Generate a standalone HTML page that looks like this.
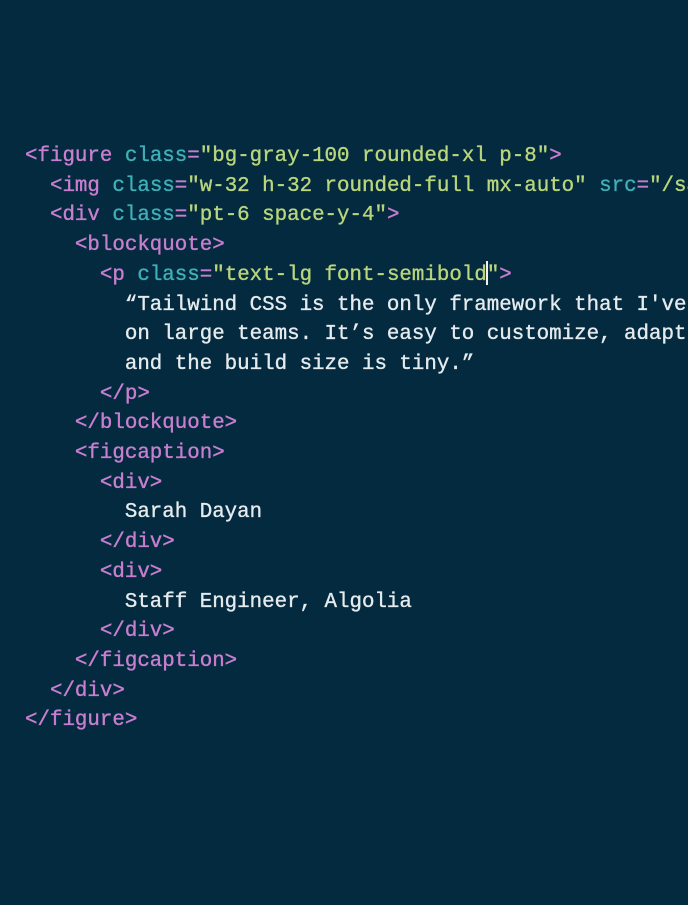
<!DOCTYPE html>
<html><head><meta charset="utf-8"><style>
html,body{margin:0;padding:0;overflow:hidden;width:688px;height:905px;}
body{background:#042a3f;position:relative;}
.wrap{position:absolute;left:0;top:0;width:688px;height:905px;overflow:hidden;}
pre{position:absolute;left:25px;top:142px;margin:0;font-family:"Liberation Mono",monospace;font-size:20.8px;line-height:29.7px;color:#e6ecee;-webkit-text-stroke:0.35px currentColor;white-space:pre;}
.t{color:#c97fd0}.a{color:#3fb0b8}.s{color:#b9d67c}
.c{display:inline-block;width:2px;height:24px;background:#f0f0f0;vertical-align:-5px;margin:0 -1px;}
</style></head><body><div class="wrap">
<pre><span class="t">&lt;figure</span> <span class="a">class</span><span class="t">=</span><span class="s">"bg-gray-100 rounded-xl p-8"</span><span class="t">&gt;</span>
  <span class="t">&lt;img</span> <span class="a">class</span><span class="t">=</span><span class="s">"w-32 h-32 rounded-full mx-auto"</span> <span class="a">src</span><span class="t">=</span><span class="s">"/sarah-dayan.jpg"</span>
  <span class="t">&lt;div</span> <span class="a">class</span><span class="t">=</span><span class="s">"pt-6 space-y-4"</span><span class="t">&gt;</span>
    <span class="t">&lt;blockquote&gt;</span>
      <span class="t">&lt;p</span> <span class="a">class</span><span class="t">=</span><span class="s">"text-lg font-semibold<span class="c"></span>"</span><span class="t">&gt;</span>
        “Tailwind CSS is the only framework that I've seen scale
        on large teams. It’s easy to customize, adapts to any design,
        and the build size is tiny.”
      <span class="t">&lt;/p&gt;</span>
    <span class="t">&lt;/blockquote&gt;</span>
    <span class="t">&lt;figcaption&gt;</span>
      <span class="t">&lt;div&gt;</span>
        Sarah Dayan
      <span class="t">&lt;/div&gt;</span>
      <span class="t">&lt;div&gt;</span>
        Staff Engineer, Algolia
      <span class="t">&lt;/div&gt;</span>
    <span class="t">&lt;/figcaption&gt;</span>
  <span class="t">&lt;/div&gt;</span>
<span class="t">&lt;/figure&gt;</span></pre>
</div></body></html>
